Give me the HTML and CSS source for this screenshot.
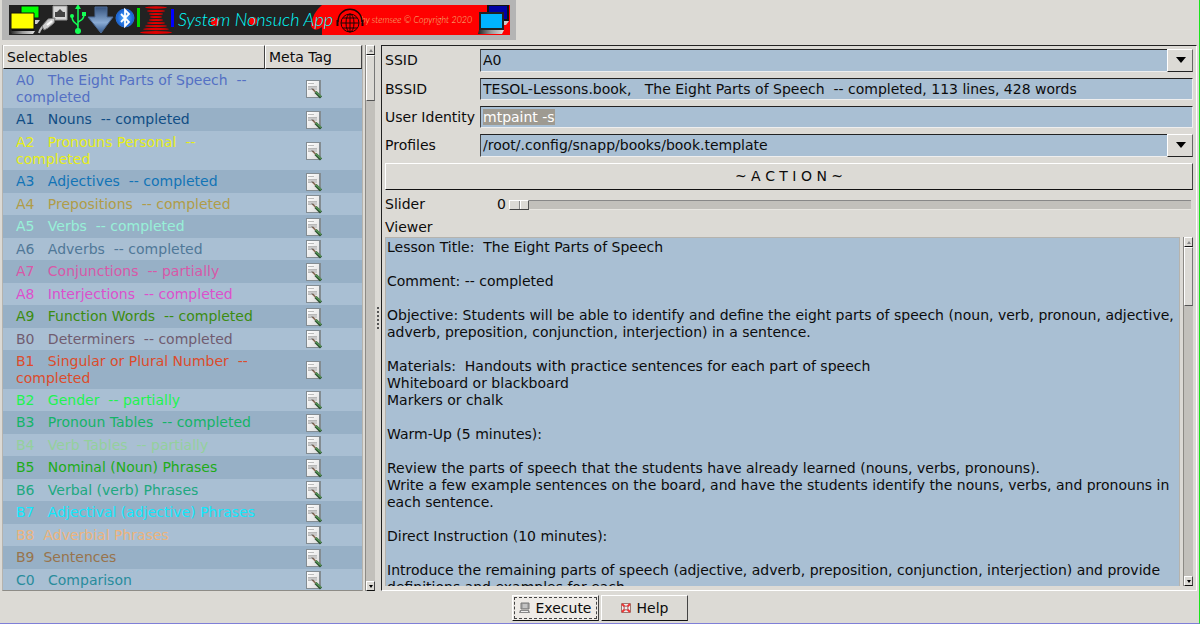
FILE: index.html
```html
<!DOCTYPE html>
<html lang="en">
<head>
<meta charset="utf-8">
<title>System Nonsuch App</title>
<link rel="stylesheet" href="styles.css">
</head>
<body>
<svg class="sprites" width="0" height="0" aria-hidden="true">
  <defs>
    <linearGradient id="paper" x1="0" y1="0" x2="1" y2="1"><stop offset="0" stop-color="#fff"/><stop offset="1" stop-color="#dcdcdc"/></linearGradient>
    <symbol id="note" viewBox="0 0 18 20">
      <path d="M1 1H16V19H1Z" fill="#838c92"/><path d="M2 2H14V18H2Z" fill="url(#paper)"/>
      <path d="M3 4.500H9" stroke="#bbb"/><path d="M3 7H12V11H3Z" fill="#cacaca"/><path d="M3 7.500H12M3 10.500H8" stroke="#b8b8b8"/>
      <path d="M10.500 13L16 18.500" stroke="#2b5230" stroke-width="3"/><path d="M10.500 12.500L16 17.500" stroke="#5b9a59" stroke-width="1.400"/>
      <path d="M7.500 10L10.500 13" stroke="#8a6c58" stroke-width="1.700"/><path d="M7 9.500L8 10.500" stroke="#333"/>
    </symbol>
  </defs>
</svg>
<header class="banner">
  <svg class="logo" width="501" height="30" viewBox="0 0 501 30" role="img" aria-label="System Nonsuch App">
    <defs>
      <linearGradient id="arrow" x1="0" y1="0" x2="0" y2="1"><stop offset="0" stop-color="#35527c"/><stop offset=".6" stop-color="#8aabd4"/><stop offset="1" stop-color="#33598e"/></linearGradient>
      <radialGradient id="ball"><stop offset="0" stop-color="#59b4ff"/><stop offset="1" stop-color="#125bd2"/></radialGradient>
      <linearGradient id="metal" x1="0" y1="0" x2="1" y2="0"><stop offset="0" stop-color="#222"/><stop offset=".5" stop-color="#999"/><stop offset="1" stop-color="#ddd"/></linearGradient>
    </defs>
    <rect width="501" height="30" fill="#222"/>
    <path d="M313 0H501V30H313V22Q305 28 302 21Q303 8 313 0Z" fill="red"/>
    <path d="M12 1H30V13H12Z" fill="#0f0" stroke="#111"/><path d="M26 15H31L28 19H26Z" fill="#ccc"/>
    <path d="M2 8H25V24H2Z" fill="#ff0" stroke="#111"/><path d="M3 24H25V26H3Z" fill="#111"/><path d="M1 26H26L24 29H3Z" fill="url(#metal)"/>
    <path d="M44 1H58V15H44Z" fill="#d7d7d7" stroke="#999"/><path d="M46 12V7H48L51 4L54 7H56V12Z" fill="#444"/>
    <path d="M30 28Q32 22 36 20" stroke="#bbb" stroke-width="2" fill="none"/><path d="M33 21L39 14L46 13L45 18L39 23L35 25Z" fill="#ccc" stroke="#777"/><path d="M38 20L43 16" stroke="#fff" stroke-width="2"/>
    <path d="M69 25V2M69 22C69 17 63 20 63 11M69 18C69 15 75 17 75 9" stroke="#14ff55" stroke-width="1.500" fill="none"/>
    <g fill="#14ff55"><circle cx="69" cy="26" r="3"/><circle cx="63" cy="11" r="2"/><path d="M69-1L72 4H66ZM73 7H77V11H73Z"/></g>
    <path d="M86 2H98V12H104L92 28L79 12H86Z" fill="url(#arrow)" stroke="#4d6b97"/>
    <circle cx="116" cy="13" r="9" fill="url(#ball)" stroke="#286dce"/><path d="M112 9L120 17L116 21V5L120 9L112 17" fill="none" stroke="#fff" stroke-width="1.800"/>
    <path d="M128 3H131V22H128Z" fill="#00d900"/><path d="M162 4H165V22H162Z" fill="#00f"/>
    <g fill="#e00000"><ellipse cx="147" cy="2.500" rx="11" ry="1.200"/><ellipse cx="147" cy="6" rx="9" ry="1"/><ellipse cx="147" cy="9" rx="7" ry="1"/><ellipse cx="147" cy="12" rx="6" ry="1"/><ellipse cx="147" cy="15" rx="7" ry="1"/><ellipse cx="147" cy="18" rx="9" ry="1"/><ellipse cx="147" cy="21" rx="11" ry="1.100"/><ellipse cx="147" cy="24" rx="13" ry="1.200"/><ellipse cx="147" cy="27.500" rx="16" ry="1.500"/></g>
    <circle cx="206" cy="17" r="4" fill="red"/><circle cx="244" cy="16" r="4" fill="red"/>
    <text x="169" y="21" class="logo-title">System Nonsuch App</text>
    <text x="352" y="18" class="logo-small">by stemsee © Copyright 2020</text>
    <g fill="none" stroke="#1b0505"><circle cx="341" cy="18" r="9"/><ellipse cx="341" cy="18" rx="4" ry="9"/><path d="M332 18H350M334 13H348M334 23H348M341 9V27"/><path d="M329 17C329 0 353 0 353 17" stroke-width="1.500"/><path d="M328.500 15V21M353.500 15V21" stroke-width="2"/></g>
    <path d="M479 0H499V15H479Z" fill="#0000a4" stroke="#111" stroke-width="2"/><path d="M495 16H500L497 20H495Z" fill="#ccc"/>
    <path d="M471 8H494V24H471Z" fill="#00b4ff" stroke="#222" stroke-width="2"/><path d="M470 25H495L493 29H469Z" fill="url(#metal)"/>
  </svg>
</header>
<main class="workspace">
  <section class="list-pane">
    <div class="list-view">
      <table class="lessons">
        <thead><tr><th>Selectables</th><th class="tag">Meta Tag</th></tr></thead>
        <tbody id="lesson-rows"></tbody>
      </table>
    </div>
    <div class="scrollbar"><button class="step" aria-label="Scroll up"><span class="up"></span></button><div class="handle list-handle"></div><button class="step last" aria-label="Scroll down"><span class="down"></span></button></div>
  </section>
  <div class="splitter"></div>
  <section class="form-pane">
    <div class="field"><label for="ssid">SSID</label><div class="combo"><select id="ssid"><option>A0</option></select></div></div>
    <div class="field"><label for="bssid">BSSID</label><input id="bssid" class="entry" type="text" value="TESOL-Lessons.book,   The Eight Parts of Speech  -- completed, 113 lines, 428 words"></div>
    <div class="field"><label for="identity">User Identity</label><input id="identity" class="entry" type="text" value="mtpaint -s"></div>
    <div class="field"><label for="profiles">Profiles</label><div class="combo"><select id="profiles"><option>/root/.config/snapp/books/book.template</option></select></div></div>
    <button class="action">~ A C T I O N ~</button>
    <div class="field slider-row"><label for="slider">Slider</label><output for="slider">0</output><input id="slider" class="slider" type="range" min="0" max="100" value="0"></div>
    <label class="viewer-label" for="viewer">Viewer</label>
    <div class="viewer">
      <textarea id="viewer" readonly>Lesson Title:  The Eight Parts of Speech

Comment: -- completed

Objective: Students will be able to identify and define the eight parts of speech (noun, verb, pronoun, adjective, adverb, preposition, conjunction, interjection) in a sentence.

Materials:  Handouts with practice sentences for each part of speech
Whiteboard or blackboard
Markers or chalk

Warm-Up (5 minutes):

Review the parts of speech that the students have already learned (nouns, verbs, pronouns).
Write a few example sentences on the board, and have the students identify the nouns, verbs, and pronouns in each sentence.

Direct Instruction (10 minutes):

Introduce the remaining parts of speech (adjective, adverb, preposition, conjunction, interjection) and provide definitions and examples for each.</textarea>
      <div class="scrollbar"><button class="step" aria-label="Scroll up"><span class="up"></span></button><div class="handle viewer-handle"></div><button class="step last" aria-label="Scroll down"><span class="down"></span></button></div>
    </div>
  </section>
</main>
<footer class="actions">
  <button class="focused"><svg width="12" height="12" viewBox="0 0 12 12" aria-hidden="true"><path d="M2 1H10V7H2Z" fill="#aaa" stroke="#777"/><path d="M4 3H8M4 5H8" stroke="#ddd"/><path d="M1 8H10L11 11H0Z" fill="#888"/><path d="M2 9.500H9" stroke="#eee"/></svg>Execute</button>
  <button><svg width="12" height="12" viewBox="0 0 12 12" aria-hidden="true"><path d="M1.500 1.500H10.500V10.500H1.500Z" fill="#eee" stroke="#9c7770"/><path d="M2 2L10 10M10 2L2 10" stroke="#e33" stroke-width="2"/><circle cx="6" cy="6" r="2" fill="#eee" stroke="#a66"/></svg>Help</button>
</footer>
<script src="app.js"></script>
</body>
</html>
```

FILE: styles.css
```css
* { box-sizing: border-box; }
body {
  margin: 0;
  height: 100vh;
  display: flex;
  flex-direction: column;
  background: #dcdad5;
  border-right: 1px solid #1be41b;
  border-bottom: 1px solid #7f7fd8;
  font: 14px/17px "DejaVu Sans", sans-serif;
  color: #0c0c0c;
  overflow: hidden;
}
button, input, select, textarea { font: inherit; color: inherit; margin: 0; border-radius: 0; }
.sprites { position: absolute; }
.banner {
  align-self: flex-start;
  margin: 0 0 5px 2px;
  padding: 5px 6px 5px 7px;
  background: #b4b4b4;
}
.logo { display: block; }
.logo-title { font: italic 300 18px Lato, sans-serif; fill: #0ff; }
.logo-small { font: italic 300 9px Lato, sans-serif; fill: #f0c080; }
.workspace { flex: 1; min-height: 0; display: flex; padding: 0 2px; }
.list-pane { flex: 0 0 373px; display: flex; gap: 2px; min-height: 0; }
.list-view {
  flex: 1;
  overflow: hidden;
  background: #a9bfd3;
  border: 1px solid #b5b3ae;
  border-top: 0;
  border-bottom-color: #8e8c87;
}
.lessons { width: 100%; border-collapse: separate; border-spacing: 0; table-layout: fixed; }
.lessons th {
  height: 24px;
  padding: 0 3px;
  text-align: left;
  font-weight: normal;
  background: #dcdad5;
  border: 1px solid #fff;
  border-right-color: #444;
  border-bottom-color: #111;
}
.lessons .tag { width: 97px; }
.lessons td { height: 22px; padding: 0 4px 0 13px; white-space: pre-wrap; vertical-align: middle; }
.lessons tr:nth-child(even) td { height: 23px; background: #97b0c6; }
.lessons tbody .long td { height: 39px; }
.lessons td.tag { padding: 0; text-align: center; }
.lessons td svg { display: block; margin: 0 auto; }
.scrollbar {
  flex: 0 0 10px;
  display: flex;
  flex-direction: column;
  background: #c2c0bb;
  border-left: 1px solid #8c8a85;
}
.step {
  height: 10px;
  padding: 0;
  display: flex;
  align-items: center;
  justify-content: center;
  background: #dcdad5;
  border: 1px solid #fff;
  border-right-color: #444;
  border-bottom-color: #111;
}
.step.last { margin-top: auto; }
.up, .down { border: 2px solid transparent; }
.up { border-top: 0; border-bottom: 3px solid #888; }
.down { border-bottom: 0; border-top: 3px solid #000; }
.handle {
  background: #dcdad5;
  border: 1px solid #fff;
  border-right-color: #777;
  border-bottom-color: #555;
}
.list-handle { height: 46px; }
.viewer-handle { height: 59px; }
.splitter { flex: 0 0 6px; display: flex; align-items: center; justify-content: center; }
.splitter::before { content: ""; height: 22px; border-left: 2px dotted #555; }
.form-pane {
  flex: 1;
  min-width: 0;
  display: flex;
  flex-direction: column;
  gap: 6px;
  padding: 3px 3px 4px;
  border: 1px solid #fff;
  border-left-color: #222;
  border-top-color: #222;
}
.field { display: flex; align-items: center; }
.field label { flex: 0 0 95px; }
.entry, .combo select {
  min-width: 0;
  padding: 0 2px;
  background: #a9bfd3;
  border: 1px solid #eee;
  border-top-color: #222;
  border-left-color: #444;
  outline: 0;
}
.entry { flex: 1; height: 22px; }
.entry::selection { background: #9e9a91; color: #fff; }
.combo { flex: 1; position: relative; display: flex; }
.combo select { flex: 1; height: 23px; appearance: none; }
.combo::before {
  content: "";
  position: absolute;
  right: 0;
  top: 0;
  bottom: 0;
  width: 24px;
  background: #dcdad5;
  border: 1px solid #fff;
  border-right-color: #666;
  border-bottom-color: #222;
  pointer-events: none;
}
.combo::after {
  content: "";
  position: absolute;
  right: 7px;
  top: 8px;
  border: 5px solid transparent;
  border-top: 6px solid #000;
  border-bottom: 0;
  pointer-events: none;
}
.action, .actions button {
  height: 26px;
  padding: 0;
  background: #dcdad5;
  border: 1px solid #fff;
  border-right-color: #444;
  border-bottom-color: #111;
}
.action { height: 27px; }
.slider-row { height: 17px; }
.field output { flex: 0 0 29px; padding-left: 17px; }
.slider {
  flex: 1;
  height: 10px;
  margin-right: 2px;
  appearance: none;
  background: #c2c0bb;
  border-top: 1px solid #888;
  border-bottom: 1px solid #e8e6e1;
}
.slider::-webkit-slider-thumb {
  appearance: none;
  width: 20px;
  height: 10px;
  background: linear-gradient(90deg, transparent 9px, #888 9px, #888 10px, #fff 10px, #fff 11px, transparent 11px) #dcdad5;
  border: 1px solid #fff;
  border-right-color: #555;
  border-bottom-color: #444;
}
.viewer-label { height: 12px; }
.viewer { flex: 1; min-height: 0; display: flex; gap: 3px; }
.viewer textarea {
  flex: 1;
  min-width: 0;
  padding: 1px 1px 0;
  resize: none;
  overflow: hidden;
  background: #a9bfd3;
  border: 1px solid #b5b3ae;
  border-bottom: 0;
  outline: 0;
}
.actions { flex: 0 0 32px; display: flex; align-items: center; justify-content: center; gap: 2px; padding-top: 2px; }
.actions button { width: 87px; display: flex; align-items: center; justify-content: center; gap: 5px; }
.actions .focused { background: #eeebe7; outline: 1px dashed #444; outline-offset: -3px; }
```

FILE: app.js
```js
const lessons = [
  ["A0   The Eight Parts of Speech  -- completed", "#5470c4", true],
  ["A1   Nouns  -- completed", "#104d84"],
  ["A2   Pronouns Personal  -- completed", "#e6ee18", true],
  ["A3   Adjectives  -- completed", "#1274b6"],
  ["A4   Prepositions  -- completed", "#b09c48"],
  ["A5   Verbs  -- completed", "#98f0d8"],
  ["A6   Adverbs  -- completed", "#507898"],
  ["A7   Conjunctions  -- partially", "#d858a8"],
  ["A8   Interjections  -- completed", "#dc50cc"],
  ["A9   Function Words  -- completed", "#3c8c10"],
  ["B0   Determiners  -- completed", "#705c70"],
  ["B1   Singular or Plural Number  -- completed", "#dc4c2c", true],
  ["B2   Gender  -- partially", "#20f450"],
  ["B3   Pronoun Tables  -- completed", "#14b468"],
  ["B4   Verb Tables  -- partially", "#94d09c"],
  ["B5   Nominal (Noun) Phrases", "#20ac18"],
  ["B6   Verbal (verb) Phrases", "#20a880"],
  ["B7   Adjectival (adjective) Phrases", "#10e8fc"],
  ["B8  Adverbial Phrases", "#ecb47c"],
  ["B9  Sentences", "#98744c"],
  ["C0   Comparison", "#288c9c"]
];
const body = document.getElementById("lesson-rows");
for (const [title, color, long] of lessons) {
  const row = body.insertRow();
  if (long) row.className = "long";
  const name = row.insertCell();
  name.textContent = title;
  name.style.color = color;
  const tag = row.insertCell();
  tag.className = "tag";
  tag.innerHTML = '<svg width="18" height="20" aria-label="Edit note"><use href="#note"/></svg>';
}
const identity = document.getElementById("identity");
identity.focus();
identity.select();
```
